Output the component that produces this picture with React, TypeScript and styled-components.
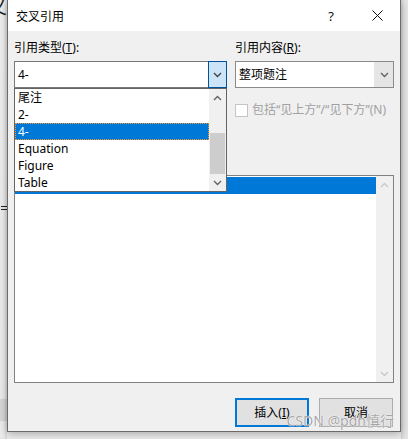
import React from "react";
import styled, { createGlobalStyle } from "styled-components";

const Global = createGlobalStyle`
  html, body { margin: 0; padding: 0; }
  body {
    font-family: "Noto Sans", "Noto Sans CJK SC", sans-serif;
    font-size: 12px;
    color: #000;
    background: #e9e9e9;
  }
  * { box-sizing: border-box; }
`;

const Page = styled.div`
  width: 408px;
  height: 439px;
  display: flex;
  overflow: hidden;
  background: #ececec;
`;

const LeftStrip = styled.div`
  width: 7px;
  flex: none;
  display: flex;
  flex-direction: column;
  overflow: hidden;
  background: linear-gradient(to bottom, #eeeeee 0, #eaeaea 399px, #d6d6d6 399px, #d6d6d6 421px, #ebebeb 421px);
  box-shadow: inset -2px 0 2px rgba(0, 0, 0, 0.08);
`;

const Glyph = styled.span`
  display: block;
  height: 12px;
  line-height: 20px;
  font-size: 20px;
  font-family: "Noto Sans CJK SC", sans-serif;
  margin-left: -13px;
  margin-top: -4px;
  color: #222;
`;

const Dots = styled.div`
  margin-top: 197px;
  margin-left: 1px;
  width: 7px;
  height: 5px;
  background-image: radial-gradient(circle, #222 0.9px, transparent 1px);
  background-size: 2px 3px;
`;

const RightStrip = styled.div`
  flex: 1;
  background: linear-gradient(to right, #cfcfcf 0, #e2e2e2 3px, #e6e6e6 100%);
`;

const Dialog = styled.div`
  position: relative;
  width: 394px;
  height: 432px;
  flex: none;
  display: flex;
  flex-direction: column;
  border: 1px solid #6b6b6b;
  border-top: none;
  background: #f0f0f0;
  box-shadow: 0 2px 8px rgba(0, 0, 0, 0.28);
`;

const TitleBar = styled.div`
  height: 31px;
  flex: none;
  display: flex;
  align-items: center;
  background: #fff;
  padding-left: 8px;
`;

const TitleText = styled.span`
  flex: 1;
  font-family: "Noto Sans CJK SC", sans-serif;
  font-size: 12px;
  line-height: 16px;
`;

const CaptionButton = styled.div`
  width: 46px;
  height: 31px;
  display: flex;
  align-items: center;
  justify-content: center;
  font-size: 13px;
  color: #111;
`;

const Body = styled.div`
  flex: 1;
  display: flex;
  flex-direction: column;
  padding: 9px 6px 0 6px;
`;

const TopGrid = styled.div`
  display: grid;
  grid-template-columns: 213px 159px;
  column-gap: 8px;
`;

const Field = styled.div`
  display: flex;
  flex-direction: column;
  gap: 5px;
`;

const Label = styled.div<{ $disabled?: boolean }>`
  line-height: 16px;
  height: 16px;
  white-space: nowrap;
  color: ${(p) => (p.$disabled ? "#a0a0a0" : "#000")};
`;

const ComboWrap = styled.div`
  position: relative;
`;

const Combo = styled.div<{ $light?: boolean }>`
  height: 27px;
  display: flex;
  align-items: stretch;
  background: #fff;
  border: 1px solid ${(p) => (p.$light ? "#8a8a8a" : "#7a7a7a")};
`;

const ComboText = styled.div`
  flex: 1;
  display: flex;
  align-items: center;
  padding-left: 3px;
  line-height: 16px;
  white-space: nowrap;
`;

const ComboButton = styled.div<{ $active?: boolean }>`
  width: 19px;
  display: flex;
  align-items: center;
  justify-content: center;
  background: ${(p) => (p.$active ? "#cce4f7" : "#e5e5e5")};
  border: ${(p) => (p.$active ? "1px solid #005499" : "none")};
  border-left: 1px solid ${(p) => (p.$active ? "#005499" : "#e5e5e5")};
  margin: ${(p) => (p.$active ? "-1px -1px -1px 0" : "0")};
`;

const DropList = styled.div`
  position: absolute;
  top: 100%;
  left: 0;
  right: 0;
  height: 104px;
  display: flex;
  background: #fff;
  border: 1px solid #646464;
  z-index: 5;
`;

const Items = styled.div`
  flex: 1;
  display: flex;
  flex-direction: column;
`;

const Item = styled.div<{ $selected?: boolean }>`
  height: 17px;
  line-height: 17px;
  padding-left: 3px;
  white-space: nowrap;
  color: ${(p) => (p.$selected ? "#fff" : "#000")};
  background: ${(p) => (p.$selected ? "#0078d7" : "transparent")};
  outline: ${(p) => (p.$selected ? "1px dotted #ff9a30" : "none")};
  outline-offset: -1px;
`;

const ScrollBar = styled.div`
  width: 17px;
  flex: none;
  display: flex;
  flex-direction: column;
  background: #f0f0f0;
`;

const ScrollArrow = styled.div`
  height: 17px;
  flex: none;
  display: flex;
  align-items: center;
  justify-content: center;
`;

const Track = styled.div`
  flex: 1;
  display: flex;
  flex-direction: column;
  justify-content: flex-end;
`;

const Thumb = styled.div<{ $h: number }>`
  height: ${(p) => p.$h}px;
  margin: 0 1px;
  background: #cdcdcd;
`;

const CheckRow = styled.div`
  margin-top: 10px;
  display: flex;
  align-items: center;
  gap: 4px;
  height: 14px;
`;

const CheckBox = styled.div`
  width: 13px;
  height: 13px;
  border: 1px solid #c4c4c4;
  background: #fff;
  flex: none;
`;

const BigList = styled.div`
  margin-top: 58px;
  height: 208px;
  display: flex;
  border: 1px solid #828282;
  background: #fff;
`;

const BigItems = styled.div`
  flex: 1;
  padding: 1px 0 0 0;
`;

const BigRow = styled.div`
  height: 17px;
  background: #0078d7;
`;

const Buttons = styled.div`
  margin-top: 15px;
  display: flex;
  justify-content: flex-end;
  gap: 10px;
  padding-right: 1px;
`;

const Button = styled.div<{ $default?: boolean }>`
  width: 74px;
  height: 29px;
  display: flex;
  align-items: center;
  justify-content: center;
  background: #e1e1e1;
  border: ${(p) => (p.$default ? "2px solid #0078d7" : "1px solid #adadad")};
  line-height: 16px;
`;

const Watermark = styled.div`
  position: absolute;
  right: 6px;
  bottom: 2px;
  font-family: "Noto Sans", "Noto Sans CJK SC", sans-serif;
  font-size: 14px;
  line-height: 16px;
  color: rgba(150, 150, 150, 0.85);
  text-shadow: 0 0 1px #fff, 0 0 1px #fff;
  white-space: nowrap;
`;

const Chevron = ({ dir, color }: { dir: "up" | "down"; color: string }) => (
  <svg width="9" height="6" viewBox="0 0 9 6">
    <polyline
      points={dir === "down" ? "1,1 4.5,4.5 8,1" : "1,5 4.5,1.5 8,5"}
      fill="none"
      stroke={color}
      strokeWidth="1.3"
    />
  </svg>
);

const CloseIcon = () => (
  <svg width="11" height="11" viewBox="0 0 11 11">
    <path d="M0.5 0.5 L10.5 10.5 M10.5 0.5 L0.5 10.5" stroke="#111" strokeWidth="1" />
  </svg>
);

export default function App() {
  const items = ["尾注", "2-", "4-", "Equation", "Figure", "Table"];
  return (
    <>
      <Global />
      <Page>
        <LeftStrip>
          <Glyph>叉</Glyph>
          <Dots />
        </LeftStrip>
        <Dialog>
          <TitleBar>
            <TitleText>交叉引用</TitleText>
            <CaptionButton>?</CaptionButton>
            <CaptionButton>
              <CloseIcon />
            </CaptionButton>
          </TitleBar>
          <Body>
            <TopGrid>
              <Field>
                <Label>
                  引用类型(<u>T</u>):
                </Label>
                <ComboWrap>
                  <Combo>
                    <ComboText>4-</ComboText>
                    <ComboButton $active>
                      <Chevron dir="down" color="#404040" />
                    </ComboButton>
                  </Combo>
                  <DropList>
                    <Items>
                      {items.map((t) => (
                        <Item key={t} $selected={t === "4-"}>
                          {t}
                        </Item>
                      ))}
                    </Items>
                    <ScrollBar>
                      <ScrollArrow>
                        <Chevron dir="up" color="#606060" />
                      </ScrollArrow>
                      <Track>
                        <Thumb $h={41} />
                      </Track>
                      <ScrollArrow>
                        <Chevron dir="down" color="#606060" />
                      </ScrollArrow>
                    </ScrollBar>
                  </DropList>
                </ComboWrap>
              </Field>
              <Field>
                <Label>
                  引用内容(<u>R</u>):
                </Label>
                <Combo $light>
                  <ComboText>整项题注</ComboText>
                  <ComboButton>
                    <Chevron dir="down" color="#606060" />
                  </ComboButton>
                </Combo>
                <CheckRow>
                  <CheckBox />
                  <Label $disabled>包括“见上方”/“见下方”(N)</Label>
                </CheckRow>
              </Field>
            </TopGrid>
            <BigList>
              <BigItems>
                <BigRow />
              </BigItems>
              <ScrollBar>
                <ScrollArrow>
                  <Chevron dir="up" color="#c8c8c8" />
                </ScrollArrow>
                <Track />
                <ScrollArrow>
                  <Chevron dir="down" color="#c8c8c8" />
                </ScrollArrow>
              </ScrollBar>
            </BigList>
            <Buttons>
              <Button $default>
                插入(<u>I</u>)
              </Button>
              <Button>取消</Button>
            </Buttons>
          </Body>
          <Watermark>CSDN @pdh慎行</Watermark>
        </Dialog>
        <RightStrip />
      </Page>
    </>
  );
}
